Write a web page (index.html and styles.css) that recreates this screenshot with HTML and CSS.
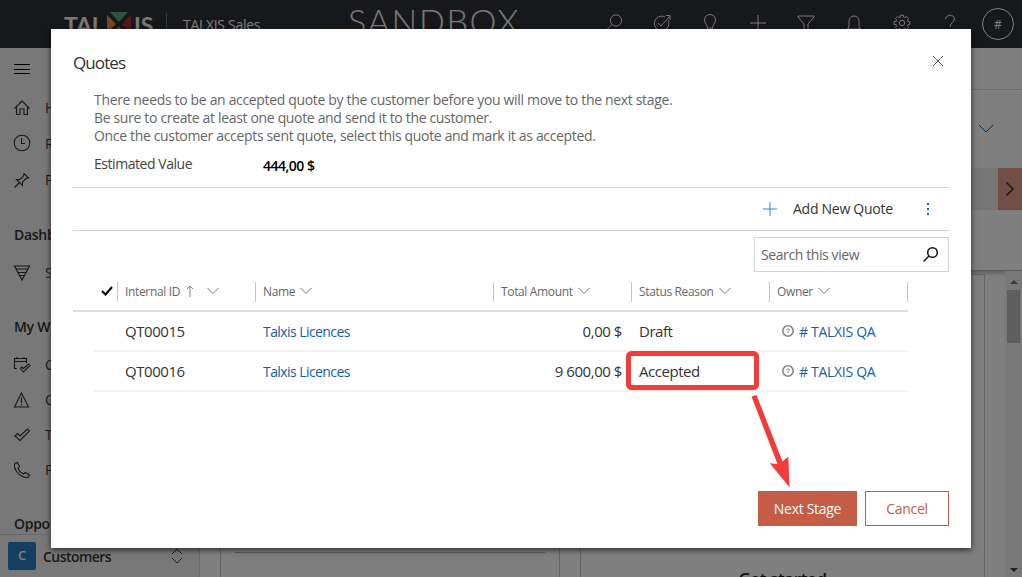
FILE: index.html
```
<!DOCTYPE html>
<html lang="en">
<head>
<meta charset="utf-8">
<title>TALXIS Sales</title>
<link rel="stylesheet" href="styles.css">
</head>
<body>
<div class="app">
  <header class="topbar">
    <div class="logo">
      <span class="logo-tal">TAL</span>
      <svg class="logo-mark" width="24" height="24" viewBox="0 0 24 24"><path fill="#62a587" d="M3 0H21L12 10Z"/><path fill="#e89043" d="M0 3V21L9 12Z"/><path fill="#a82e46" d="M24 3V21L15 12Z"/><path fill="#e0573a" d="M3 24H21L12 14Z"/></svg>
      <span class="logo-is">IS</span>
    </div>
    <div class="app-name">TALXIS Sales</div>
    <div class="env">SANDBOX</div>
    <nav class="tools">
      <svg class="tool" viewBox="-9 -9 18 18"><circle cx="2" cy="-2.500" r="5.600"/><path d="M-2 1.500L-8 7.500"/></svg>
      <svg class="tool" viewBox="-9 -9 18 18"><path d="M3-6A7.200 7.200 0 1 0 6-3M-4 0L-1 3L8-7M4-7.500H8V-3"/></svg>
      <svg class="tool" viewBox="-9 -9 18 18"><path d="M-2.500 8V5C-2.500 2-5.500 0-5.500-3A5.500 5.500 0 0 1 5.500-3C5.500 0 2.500 2 2.500 5V8ZM-2.500 5H2.500"/></svg>
      <svg class="tool" viewBox="-9 -9 18 18"><path d="M-8 0H8M0-8V8"/></svg>
      <svg class="tool" viewBox="-9 -9 18 18"><path d="M-8-7H8V-6L2 1V8H-2V1L-8-6Z"/></svg>
      <svg class="tool" viewBox="-9 -9 18 18"><path d="M-7 6H7M-6 6L-5 3V-2A5 5 0 0 1 5-2V3L6 6M-2 6A2 2 0 0 0 2 6"/></svg>
      <svg class="tool" viewBox="-9 -9 18 18"><circle r="2.700"/><path d="M5.740-1.750L7.850-1.530V1.530L5.740 1.750L5.300 2.820L6.630 4.470L4.470 6.630L2.820 5.300L1.750 5.740L1.530 7.850H-1.530L-1.750 5.740L-2.820 5.300L-4.470 6.630L-6.630 4.470L-5.300 2.820L-5.740 1.750L-7.850 1.530V-1.530L-5.740-1.750L-5.300-2.820L-6.630-4.470L-4.470-6.630L-2.820-5.300L-1.750-5.740L-1.530-7.850H1.530L1.750-5.740L2.820-5.300L4.470-6.630L6.630-4.470L5.300-2.820Z"/></svg>
      <svg class="tool" viewBox="-9 -9 18 18"><path d="M-4.500-4C-4-9 4.500-9 4.500-4C4.500-1 0 0 0 4M0 6V8"/></svg>
      <div class="avatar">#</div>
    </nav>
  </header>
  <div class="workspace">
    <aside class="sidebar">
      <div class="nav-item menu"><svg class="nav-icon" viewBox="0 0 18 18"><path d="M1 4.500H17M1 9.500H17M1 13.500H17"/></svg></div>
      <div class="nav-item home"><svg class="nav-icon" viewBox="0 0 18 18"><path d="M1.500 9.500L9 2L16.500 9.500M3.500 8V15.500H7V10H11V15.500H14.500V8"/></svg>H</div>
      <div class="nav-item recent"><svg class="nav-icon" viewBox="0 0 18 18"><circle cx="9" cy="9" r="7.800"/><path d="M8.500 4V9.500H12"/></svg>R</div>
      <div class="nav-item pinned"><svg class="nav-icon" viewBox="0 0 18 18"><path d="M1.500 16.500L6.500 11.500M3.500 8.500L9.500 14.500V11L13 7.500L15.500 7L11 2.500L10.500 5L7 8.500Z"/></svg>P</div>
      <div class="nav-title dash">Dashb</div>
      <div class="nav-item sales"><svg class="nav-icon" viewBox="0 0 18 18"><path d="M1.500 2H16.500L9 16ZM3 5H15M5 8.500H13M7 11.500H11"/></svg>S</div>
      <div class="nav-title work">My W</div>
      <div class="nav-item act"><svg class="nav-icon" viewBox="0 0 18 18"><path d="M4 12.500H1.500V2.500H13.500V7M1.500 5.500H13.500M4 1V3M11 1V3M7.500 12.500L9 11L10.500 12.500L15.500 8L17 9.500L10.500 16Z"/></svg>C</div>
      <div class="nav-item"><svg class="nav-icon" viewBox="0 0 18 18"><path d="M8.500 2L15.500 16H1.500ZM8.500 6.500V12M8.500 13V14.500"/></svg>C</div>
      <div class="nav-item"><svg class="nav-icon" viewBox="0 0 18 18"><path d="M2 10L4.500 7.500L7 10L14.500 3L16.500 5L7 14.500Z"/></svg>T</div>
      <div class="nav-item"><svg class="nav-icon" viewBox="0 0 18 18"><path d="M2 2.500L4.500 1.500L6.500 5.500L5 7.500C6 10 8 12 10.500 13L12.500 11.500L16.500 14L15.500 16C12 18 6 14 3.500 10.500C1.500 7.500 1 4.500 2 2.500Z"/></svg>P</div>
      <div class="nav-title oppo">Oppo</div>
      <div class="area">
        <span class="area-tile">C</span>
        <span class="area-name">Customers</span>
        <svg class="area-arrows" width="12" height="18" viewBox="0 0 12 18"><path d="M1 7L6 2L11 7M1 11L6 16L11 11"/></svg>
      </div>
    </aside>
    <main class="record">
      <div class="commands"></div>
      <div class="record-head"><svg width="16" height="10" viewBox="0 0 16 10"><path d="M1 1L8 8L15 1"/></svg></div>
      <div class="stages"><div class="stage-next"><svg width="10" height="16" viewBox="0 0 10 16"><path d="M1.500 1.500L8 8L1.500 14.500"/></svg></div></div>
      <div class="tabs"></div>
      <div class="form">
        <div class="cards">
          <section class="card first"><div class="card-rule"></div></section>
          <section class="card second"><h2 class="card-title">Get started</h2></section>
        </div>
        <div class="scrollbar"><span class="arrow-up"></span><span class="thumb"></span><span class="arrow-down"></span></div>
      </div>
    </main>
  </div>
</div>
<div class="overlay"></div>
<div class="modal">
  <div class="modal-head">
    <h1 class="modal-title">Quotes</h1>
    <svg class="close" width="12" height="12" viewBox="0 0 12 12"><path d="M1 1L11 11M11 1L1 11"/></svg>
  </div>
  <div class="intro">
    <div>There needs to be an accepted quote by the customer before you will move to the next stage.</div>
    <div>Be sure to create at least one quote and send it to the customer.</div>
    <div>Once the customer accepts sent quote, select this quote and mark it as accepted.</div>
  </div>
  <div class="estimate"><span class="estimate-label">Estimated Value</span><span class="estimate-value">444,00 $</span></div>
  <div class="toolbar">
    <svg class="add-icon" width="14" height="14" viewBox="0 0 14 14"><path d="M0 7H14M7 0V14"/></svg>
    <span class="add-label">Add New Quote</span>
    <svg class="more" width="4" height="14" viewBox="0 0 4 14"><path d="M1 1H3V3H1ZM1 6H3V8H1ZM1 11H3V13H1Z"/></svg>
  </div>
  <div class="search"><span>Search this view</span><svg width="18" height="18" viewBox="0 0 18 18"><circle cx="10.500" cy="6.500" r="4.800"/><path d="M7 10L1.500 15.500"/></svg></div>
  <div class="grid">
    <div class="row head">
      <div class="cell check"><svg width="12" height="10" viewBox="0 0 12 10"><path d="M1 5L4.500 8.500L11 1"/></svg></div>
      <div class="cell"><span>Internal ID</span><svg class="sort" width="8" height="12" viewBox="0 0 8 12"><path d="M4 12V1M1 4L4 1L7 4"/></svg><svg class="chev wide" width="12" height="8" viewBox="0 0 12 8"><path d="M.5 1L6 6.500L11.500 1"/></svg></div>
      <div class="cell"><span>Name</span><svg class="chev" width="12" height="8" viewBox="0 0 12 8"><path d="M.5 1L6 6.500L11.500 1"/></svg></div>
      <div class="cell"><span>Total Amount</span><svg class="chev" width="12" height="8" viewBox="0 0 12 8"><path d="M.5 1L6 6.500L11.500 1"/></svg></div>
      <div class="cell"><span>Status Reason</span><svg class="chev" width="12" height="8" viewBox="0 0 12 8"><path d="M.5 1L6 6.500L11.500 1"/></svg></div>
      <div class="cell last"><span>Owner</span><svg class="chev" width="12" height="8" viewBox="0 0 12 8"><path d="M.5 1L6 6.500L11.500 1"/></svg></div>
    </div>
    <div class="row data">
      <div class="cell id">QT00015</div>
      <div class="cell link">Talxis Licences</div>
      <div class="cell money">0,00 $</div>
      <div class="cell">Draft</div>
      <div class="cell link owner"><svg width="14" height="14" viewBox="0 0 14 14"><circle cx="7" cy="7" r="5.200"/><path d="M5.500 6C5.500 4.500 8.500 4.500 8.500 6C8.500 7 7 7 7 8V9"/></svg># TALXIS QA</div>
    </div>
    <div class="row data">
      <div class="cell id">QT00016</div>
      <div class="cell link">Talxis Licences</div>
      <div class="cell money">9 600,00 $</div>
      <div class="cell">Accepted</div>
      <div class="cell link owner"><svg width="14" height="14" viewBox="0 0 14 14"><circle cx="7" cy="7" r="5.200"/><path d="M5.500 6C5.500 4.500 8.500 4.500 8.500 6C8.500 7 7 7 7 8V9"/></svg># TALXIS QA</div>
    </div>
  </div>
  <div class="actions"><button class="btn primary">Next Stage</button><button class="btn">Cancel</button></div>
</div>
<svg class="annotation" width="170" height="142" viewBox="622 348 170 142"><rect x="628.500" y="353.500" width="128" height="34" rx="3"/><path d="M751.500 396.500L756.500 395L782.500 461.500L788.300 456.800L789.600 487.500L769.800 463.200L777.500 464Z"/></svg>
</body>
</html>
```
FILE: styles.css
```
* { box-sizing: border-box; }
body {
  margin: 0;
  width: 1022px;
  height: 577px;
  overflow: hidden;
  position: relative;
  font-family: "Open Sans", "Noto Sans", sans-serif;
  font-size: 14px;
  color: #333;
}
svg { fill: none; stroke: currentColor; flex: none; }

.app { display: flex; flex-direction: column; height: 577px; }
.topbar { height: 48px; flex: none; background: #2e3038; color: #fff; display: flex; position: relative; }
.logo { display: flex; margin: 13px 0 0 64px; width: 103px; height: 27px; font: 700 23px/24px Lato, sans-serif; border-right: 1px solid #70727a; color: #f2f2f2; }
.logo-tal { width: 43px; letter-spacing: -.2px; }
.logo-mark { stroke: none; margin-top: -1px; }
.logo-is { margin-left: 3px; }
.app-name { margin: 15px 0 0 16px; width: 165px; line-height: 20px; letter-spacing: -.3px; }
.env { font: 300 34px/42px Lato, sans-serif; letter-spacing: 1.7px; white-space: nowrap; color: #f2f2f2; }
.tools { display: flex; margin-left: auto; }
.tool { width: 18px; height: 18px; margin: 14px 15px; color: #f2f2f2; }
.avatar { width: 32px; height: 32px; margin: 8px; border: 1px solid #fff; border-radius: 50%; font-size: 12px; line-height: 32px; text-align: center; }

.workspace { display: flex; flex: 1; min-height: 0; }
.sidebar { width: 200px; background: #f0f0f0; border-right: 1px solid #d6d6d6; display: flex; flex-direction: column; color: #333; }
.nav-item { height: 35px; flex: none; display: flex; align-items: center; gap: 14px; padding-left: 13px; color: #3b3a48; }
.nav-icon { width: 18px; height: 18px; color: #2c2c2c; stroke-width: 1.1; }
.menu { height: 41px; }
.menu .nav-icon { color: #000; }
.home { height: 37px; }
.recent { height: 34px; }
.pinned { height: 39px; }
.nav-title { height: 40px; flex: none; padding: 10px 0 0 14px; line-height: 20px; font-weight: 600; letter-spacing: -.3px; }
.dash { height: 56px; padding-top: 26px; }
.work { margin-top: 17px; }
.oppo { margin-top: 17px; height: 30px; }
.area { margin-top: auto; height: 43px; border-top: 1px solid #d2d2d2; display: flex; align-items: center; padding: 0 16px 0 8px; }
.area-tile { width: 28px; height: 28px; background: #2a7ec0; color: #fff; border-radius: 2px; text-align: center; line-height: 26px; font-weight: 600; font-size: 13px; }
.area-name { margin-left: 7px; font-weight: 600; font-size: 14px; letter-spacing: -.55px; }
.area-arrows { margin-left: auto; }

.record { flex: 1; display: flex; flex-direction: column; background: #fff; }
.commands { height: 42px; border-bottom: 1px solid #d8d8d8; }
.record-head { height: 78px; display: flex; justify-content: flex-end; padding: 34px 28px 0 0; color: #0b5fa5; }
.stages { height: 42px; background: #efefef; display: flex; justify-content: flex-end; }
.stage-next { width: 24px; background: #e09a8b; display: flex; align-items: center; justify-content: center; }
.stage-next svg { stroke-width: 1.6; }
.tabs { height: 61px; border-bottom: 1px solid #b4b4b4; box-shadow: 0 2px 4px #bbb; }
.form { flex: 1; display: flex; justify-content: space-between; min-height: 0; }
.cards { display: flex; gap: 20px; padding: 3px 0 0 20px; }
.card { border: 1px solid #c8c8c8; border-bottom: 0; }
.first { width: 340px; padding: 277px 14px 0; }
.card-rule { height: 1px; background: #b8b8b8; }
.second { width: 405px; padding-top: 291px; }
.card-title { margin: 0; text-align: center; font-size: 17px; line-height: 26px; font-weight: 600; letter-spacing: -.4px; color: #222; }
.scrollbar { width: 17px; background: #f0f0f0; display: flex; flex-direction: column; align-items: center; padding: 9px 0 5px; }
.arrow-up { border: 4px solid transparent; border-top: 0; border-bottom-color: #777; margin-bottom: 6px; }
.thumb { width: 13px; height: 53px; background: #bdbdbd; }
.arrow-down { border: 4px solid transparent; border-bottom: 0; border-top-color: #444; margin-top: auto; }

.overlay { position: absolute; inset: 0; background: rgba(0, 0, 0, .5); }

.modal { position: absolute; left: 51px; top: 29px; width: 920px; height: 519px; background: #fff; padding: 0 22px; box-shadow: 0 2px 6px rgba(0, 0, 0, .65); display: flex; flex-direction: column; }
.modal-head { display: flex; justify-content: space-between; height: 62px; }
.modal-title { margin: 22px 0 0; font-size: 17px; line-height: 24px; font-weight: 400; letter-spacing: -.9px; color: #333; }
.close { margin: 26px 5px 0 0; color: #666; }
.intro { padding-left: 21px; line-height: 18px; color: #666; white-space: nowrap; letter-spacing: -.335px; }
.estimate { display: flex; height: 43px; padding: 9px 0 0 21px; border-bottom: 1px solid #d3d3d3; line-height: 20px; letter-spacing: -.45px; }
.estimate-label { width: 169px; color: #444; }
.estimate-value { padding-top: 2px; font-weight: 600; font-size: 14px; letter-spacing: -.5px; color: #000; }
.toolbar { height: 43px; display: flex; align-items: center; justify-content: flex-end; border-bottom: 1px solid #d3d3d3; padding: 0 19px 1px 0; }
.add-icon { color: #2b88c8; }
.add-label { width: 100px; margin: 0 33px 0 16px; white-space: nowrap; letter-spacing: -.27px; }
.more { fill: #1160b7; stroke: none; }
.search { align-self: flex-end; width: 195px; height: 35px; margin-top: 6px; border: 1px solid #d3d3d3; display: flex; align-items: center; justify-content: space-between; padding: 0 8px 0 6px; color: #666; letter-spacing: -.4px; }
.search svg { color: #111; stroke-width: 1.5; }

.grid { width: 835px; }
.row { display: grid; }
.head { grid-template-columns: 44px 138px 238px 138px 138px 139px; height: 40px; padding-top: 10px; border-bottom: 2px solid #dedede; font-size: 12px; color: #666; letter-spacing: -.35px; }
.cell { display: flex; align-items: center; white-space: nowrap; }
.head .cell { height: 20px; border-left: 1px solid #c4c4c4; padding: 0 0 2px 7px; }
.head .check { border: 0; padding-left: 28px; color: #000; }
.check svg { stroke-width: 2; }
.head .last { border-right: 1px solid #c4c4c4; }
.chev { margin-left: 5px; color: #777; }
.sort { margin-left: 6px; color: #888; }
.wide { margin-left: 13px; }
.data { grid-template-columns: 162px 238px 138px 138px 139px; height: 40px; margin-left: 20px; border-bottom: 2px solid #f2f2f2; font-size: 15px; letter-spacing: -.45px; }
.data .cell { padding-left: 8px; }
.data .id { padding-left: 32px; }
.data .money { justify-content: flex-end; padding-right: 9px; }
.data .link { color: #1160a8; font-size: 14px; letter-spacing: -.57px; }
.data .owner { padding-left: 12px; gap: 4px; letter-spacing: -.3px; }
.owner svg { color: #888; }
.owner circle { stroke-width: 1.6; }

.actions { display: flex; justify-content: flex-end; gap: 8px; margin-top: auto; padding-bottom: 22px; }
.btn { width: 84px; height: 35px; padding: 0; border: 1px solid #c45c46; background: #fff; color: #c45c46; font: 14px "Open Sans", "Noto Sans", sans-serif; letter-spacing: -.3px; }
.primary { width: 99px; background: #c45c46; color: #fff; }

.annotation { position: absolute; left: 622px; top: 348px; }
.annotation rect { stroke: #f23b3b; stroke-width: 5; }
.annotation path { fill: #f23b3b; stroke: none; }
```
